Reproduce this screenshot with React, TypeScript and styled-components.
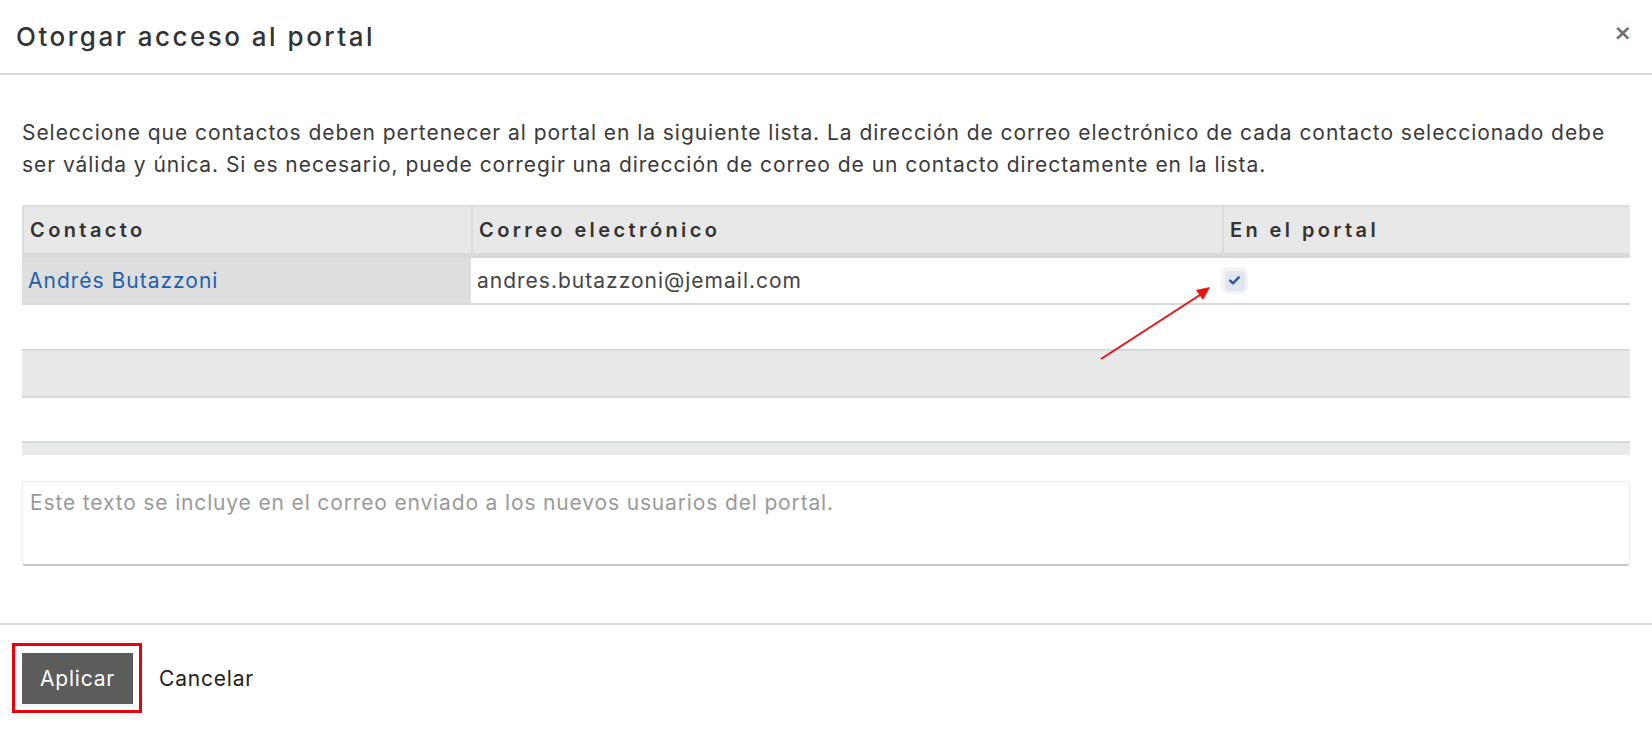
import React from 'react'
import styled, { createGlobalStyle } from 'styled-components'

const GlobalStyle = createGlobalStyle`
  html, body {
    margin: 0;
    padding: 0;
    background: #ffffff;
  }
  body {
    font-family: 'Inter', 'Open Sans', sans-serif;
    color: #3a3a3a;
  }
`

const Page = styled.div`
  position: relative;
  width: 1652px;
  height: 734px;
  overflow: hidden;
  display: flex;
  flex-direction: column;
`

const Header = styled.div`
  height: 73px;
  border-bottom: 2px solid #d8dcdf;
  display: flex;
  align-items: center;
  justify-content: space-between;
  padding: 0 20px 0 16px;
`

const Title = styled.h4`
  margin: 0;
  font-size: 26px;
  font-weight: 500;
  letter-spacing: 2.5px;
  color: #333333;
`

const CloseButton = styled.button`
  border: none;
  background: none;
  padding: 0;
  margin-top: -8px;
  color: #6f6f6f;
  font-family: 'DejaVu Sans', sans-serif;
  font-size: 22px;
  font-weight: bold;
  line-height: 1;
  cursor: pointer;
`

const Body = styled.div`
  padding: 42px 22px 57px 22px;
`

const Intro = styled.p`
  margin: 0 0 24px 0;
  font-size: 21px;
  line-height: 32px;
  letter-spacing: 0.95px;
  color: #3a3a3a;
`

const Table = styled.div`
  display: grid;
  grid-template-columns: 449px 751px 1fr;
  border-top: 2px solid #dcdfe2;
`

const HeadCell = styled.div`
  height: 46px;
  background: #e8e8e8;
  border-left: 2px solid #d9dbdd;
  border-bottom: 5px solid #d6dadd;
  display: flex;
  align-items: center;
  padding: 0 6px;
  font-size: 20px;
  font-weight: 600;
  letter-spacing: 3.4px;
  color: #333333;
`

const Cell = styled.div<{ $bg?: string; $h: number }>`
  height: ${p => p.$h}px;
  background: ${p => p.$bg || '#ffffff'};
  border-bottom: 2px solid #d6dadd;
  display: flex;
  align-items: center;
  padding: 0 6px;
  font-size: 21px;
  letter-spacing: 1px;
`

const FullRow = styled.div<{ $bg?: string; $h: number; $line?: boolean }>`
  grid-column: 1 / -1;
  height: ${p => p.$h}px;
  background: ${p => p.$bg || '#ffffff'};
  border-bottom: ${p => (p.$line ? '2px solid #d6dadd' : 'none')};
`

const ContactLink = styled.a`
  color: #1f5fae;
  text-decoration: none;
`

const EmailText = styled.span`
  color: #444444;
`

const CheckHalo = styled.span`
  width: 27px;
  height: 27px;
  margin-left: -7px;
  border-radius: 7px;
  background: #f3f4f7;
  display: flex;
  align-items: center;
  justify-content: center;
`

const CheckBox = styled.span`
  width: 20px;
  height: 20px;
  border-radius: 4px;
  background: #e1e6ee;
  display: flex;
  align-items: center;
  justify-content: center;
`

const Message = styled.textarea`
  display: block;
  box-sizing: border-box;
  width: 100%;
  height: 85px;
  margin-top: 26px;
  padding: 6px 7px;
  border: 1px solid #ececec;
  border-bottom: 2px solid #c7c7c7;
  border-radius: 4px;
  resize: none;
  font-family: 'Inter', 'Open Sans', sans-serif;
  font-size: 21px;
  line-height: 30px;
  letter-spacing: 0.85px;
  color: #333333;
  &::placeholder {
    color: #9a9a9a;
  }
`

const Footer = styled.div`
  border-top: 2px solid #d8dcdf;
  padding: 18px 12px;
  display: flex;
  align-items: center;
  gap: 17px;
`

const Highlight = styled.div`
  border: 3px solid #e8000b;
  padding: 7px 6px 6px 7px;
  display: flex;
`

const PrimaryButton = styled.button`
  height: 51px;
  width: 111px;
  padding: 0;
  border: none;
  background: #5c5c5b;
  color: #ffffff;
  font-family: 'Inter', 'Open Sans', sans-serif;
  font-size: 21px;
  letter-spacing: 0.8px;
  cursor: pointer;
`

const LinkButton = styled.button`
  border: none;
  background: none;
  padding: 0;
  color: #222222;
  font-family: 'Inter', 'Open Sans', sans-serif;
  font-size: 21px;
  letter-spacing: 0.8px;
  cursor: pointer;
`

const Arrow = styled.svg`
  position: absolute;
  left: 1095px;
  top: 280px;
  pointer-events: none;
`

const App = () => {
  return (
    <Page>
      <GlobalStyle />
      <Header>
        <Title>Otorgar acceso al portal</Title>
        <CloseButton aria-label="Cerrar">×</CloseButton>
      </Header>
      <Body>
        <Intro>
          Seleccione que contactos deben pertenecer al portal en la siguiente lista. La dirección de correo electrónico de
          cada contacto seleccionado debe ser válida y única. Si es necesario, puede corregir una dirección de correo de un
          contacto directamente en la lista.
        </Intro>
        <Table>
          <HeadCell>Contacto</HeadCell>
          <HeadCell>Correo electrónico</HeadCell>
          <HeadCell>En el portal</HeadCell>

          <Cell $h={45} $bg="#dedede">
            <ContactLink href="#">Andrés Butazzoni</ContactLink>
          </Cell>
          <Cell $h={45}>
            <EmailText>andres.butazzoni@jemail.com</EmailText>
          </Cell>
          <Cell $h={45}>
            <CheckHalo>
              <CheckBox>
                <svg width="11" height="9" viewBox="0 0 11 9">
                  <path d="M1.2 4.6 L4 7.3 L9.8 1.4" fill="none" stroke="#2a5aa6" strokeWidth="2.4" strokeLinecap="round" strokeLinejoin="round" />
                </svg>
              </CheckBox>
            </CheckHalo>
          </Cell>

          <FullRow $h={44} $line />
          <FullRow $h={45} $bg="#e8e9e9" $line />
          <FullRow $h={43} $line />
          <FullRow $h={12} $bg="#e8e9e9" />
        </Table>
        <Message placeholder="Este texto se incluye en el correo enviado a los nuevos usuarios del portal." />
      </Body>
      <Footer>
        <Highlight>
          <PrimaryButton>Aplicar</PrimaryButton>
        </Highlight>
        <LinkButton>Cancelar</LinkButton>
      </Footer>
      <Arrow width="120" height="84" viewBox="0 0 120 84">
        <line x1="6" y1="79" x2="108" y2="13" stroke="#ee1111" strokeWidth="2" />
        <polygon points="115,7 101,10 108,20" fill="#ee1111" />
      </Arrow>
    </Page>
  )
}

export default App
